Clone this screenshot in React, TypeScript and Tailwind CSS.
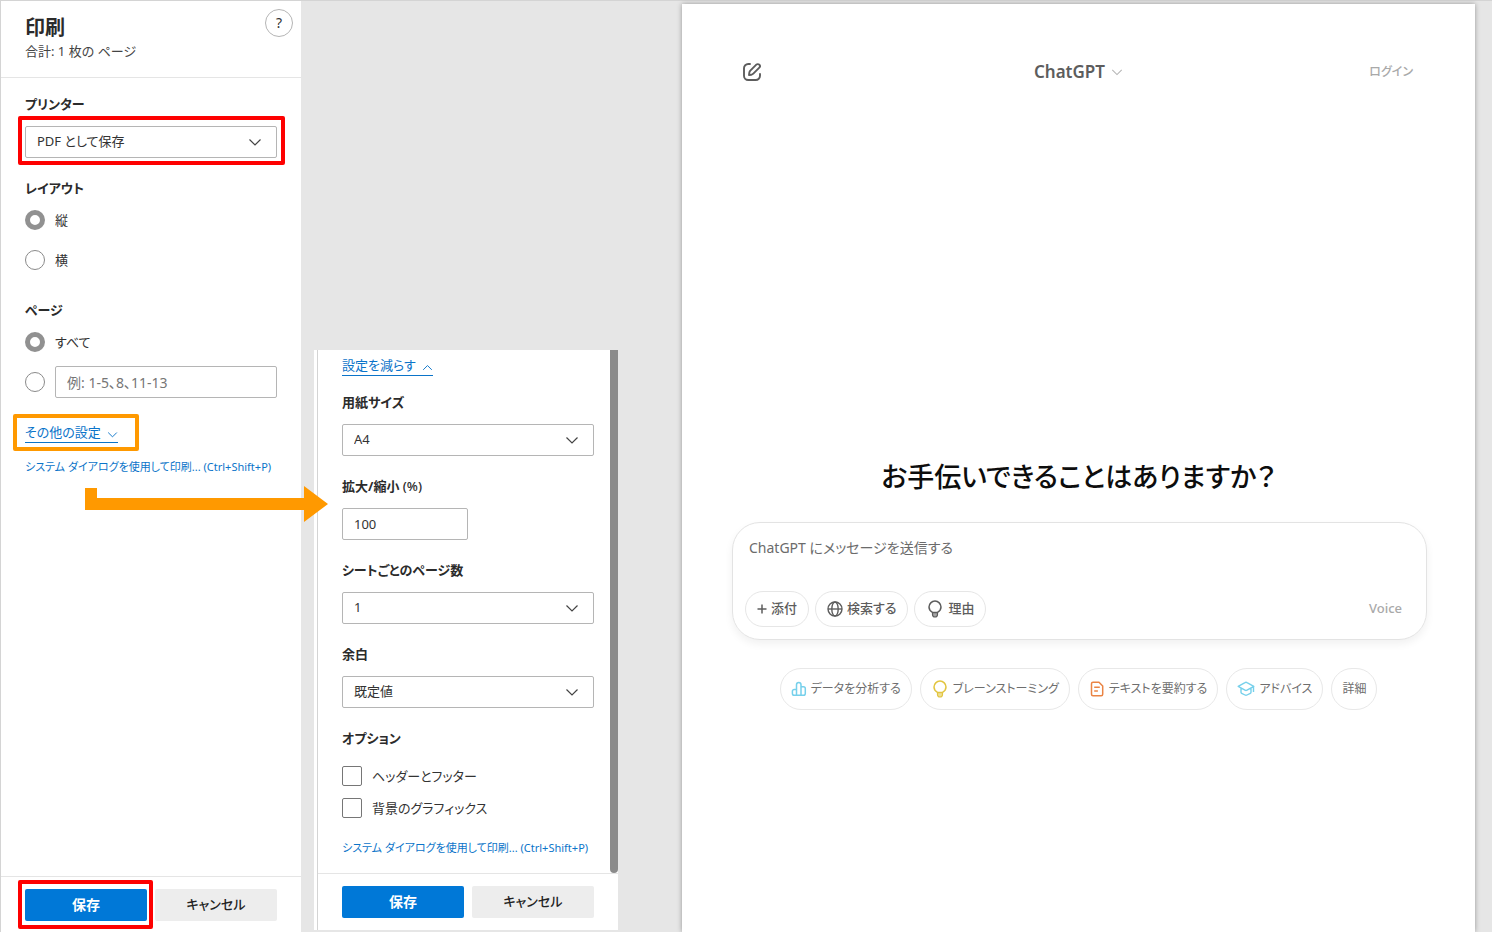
import React, { useState } from "react";

const labelClass = "block text-[13px] leading-5 font-bold text-[#2b2b2b]";

const Chevron = ({ className = "", up = false }: { className?: string; up?: boolean }) => (
  <svg
    className={className}
    viewBox="0 0 14 14"
    fill="none"
    stroke="currentColor"
    strokeWidth="1.2"
    aria-hidden="true"
  >
    <path d={up ? "M1.5 10 7 4.5 12.5 10" : "M1.5 4.5 7 10l5.5-5.5"} />
  </svg>
);

const SelectBox = ({ id, options }: { id: string; options: string[] }) => (
  <div className="relative">
    <select
      id={id}
      className="block h-8 w-full appearance-none rounded-xs border border-[#b5b5b5] bg-white pr-9 pl-[11px] text-[13px] text-[#333]"
    >
      {options.map((option) => (
        <option key={option}>{option}</option>
      ))}
    </select>
    <Chevron className="pointer-events-none absolute top-[9px] right-[15px] size-[14px] text-[#444]" />
  </div>
);

const Radio = ({
  id,
  name,
  checked,
  onChange,
  label,
}: {
  id: string;
  name: string;
  checked: boolean;
  onChange: () => void;
  label?: string;
}) => (
  <input
    type="radio"
    id={id}
    name={name}
    checked={checked}
    onChange={onChange}
    aria-label={label}
    className="size-5 shrink-0 appearance-none rounded-full border border-[#8a8a8a] bg-white checked:border-5 checked:border-[#919191]"
  />
);

const CheckRow = ({ id, label }: { id: string; label: string }) => (
  <div className="flex items-center gap-[10px]">
    <input
      type="checkbox"
      id={id}
      className="size-5 shrink-0 appearance-none rounded-xs border border-[#767676] bg-white checked:bg-[#0078d7]"
    />
    <label htmlFor={id} className="text-[13px] leading-5 text-[#333]">
      {label}
    </label>
  </div>
);

const SystemDialogLink = () => (
  <a href="#system" className="block text-[11px] leading-5 whitespace-nowrap text-[#0b74c9]">
    システム ダイアログを使用して印刷... (Ctrl+Shift+P)
  </a>
);

const SaveButton = () => (
  <button className="h-8 w-full rounded-xs bg-[#0078d7] text-sm font-bold text-white">保存</button>
);

const CancelButton = () => (
  <button className="h-8 flex-1 rounded-xs bg-[#ededed] text-[13px] font-medium text-[#222]">
    キャンセル
  </button>
);

const BulbIcon = ({ className }: { className: string }) => (
  <svg className={className} viewBox="0 0 18 18" fill="none" stroke="currentColor" strokeWidth="1.5">
    <path d="M6.5 12.4C4.3 11.2 3 9.4 3 7.1a6 6 0 0 1 12 0c0 2.3-1.3 4.1-3.5 5.3z" />
    <path
      d="M6.5 12.5v2c0 1.4.9 2.5 2.5 2.5s2.5-1.1 2.5-2.5v-2z"
      fill="currentColor"
      fillOpacity=".55"
      strokeWidth="1.2"
    />
  </svg>
);

const GlobeIcon = () => (
  <svg className="size-4" viewBox="0 0 16 16" fill="none" stroke="currentColor" strokeWidth="1.4">
    <circle cx="8" cy="8" r="7" />
    <ellipse cx="8" cy="8" rx="3.2" ry="7" />
    <path d="M1 8h14" />
  </svg>
);

const PlusIcon = () => (
  <svg className="size-[10px]" viewBox="0 0 10 10" fill="none" stroke="currentColor" strokeWidth="1.5">
    <path d="M5 .5v9M.5 5h9" />
  </svg>
);

const ChartIcon = () => (
  <svg className="size-4 text-[#76d0eb]" viewBox="0 0 16 16" fill="none" stroke="currentColor" strokeWidth="1.5">
    <path d="M5.5 14.300H3.200a1.800 1.800 0 0 1-1.800-1.800v-2.200a1.800 1.800 0 0 1 1.800-1.800h2.300zM5.500 14.300V3.700a2.200 2.200 0 0 1 4.500 0v10.600zM10 14.300V5.700h2.500a1.800 1.800 0 0 1 1.800 1.800v5a1.800 1.800 0 0 1-1.800 1.800z" />
  </svg>
);

const DocIcon = () => (
  <svg className="size-4 text-[#ea8444]" viewBox="0 0 16 16" fill="none" stroke="currentColor" strokeWidth="1.5">
    <path
      d="M4 1.2h6L13.700 5v8.300a1.500 1.500 0 0 1-1.500 1.500H4a1.500 1.500 0 0 1-1.500-1.500V2.700A1.500 1.500 0 0 1 4 1.200zM5.200 6.300h5.600M5.200 10h3.700"
      strokeLinejoin="round"
    />
  </svg>
);

const CapIcon = () => (
  <svg
    className="size-[18px] text-[#76d0eb]"
    viewBox="0 0 18 18"
    fill="none"
    stroke="currentColor"
    strokeWidth="1.4"
    strokeLinejoin="round"
  >
    <path d="M1.200 6.300 8 2.600a2 2 0 0 1 2 0l6.800 3.700L10 10.200a2 2 0 0 1-2 0zM4 8v4.200c0 .5.300.9.700 1.100L8 15a2 2 0 0 0 2 0l3.300-1.700c.4-.2.700-.6.700-1.100V8M16.500 6.500V12" />
  </svg>
);

const EditIcon = () => (
  <svg className="size-6" viewBox="0 0 24 24" fill="none" stroke="currentColor" strokeWidth="1.9" strokeLinecap="round">
    <path d="M10 4H8.200A4.200 4.200 0 0 0 4 8.200v7.600A4.200 4.200 0 0 0 8.200 20h7.600a4.200 4.200 0 0 0 4.200-4.200V14" />
    <path
      d="M16.300 4.700a2.100 2.100 0 0 1 3 3l-6 6c-.6.600-1.300.9-2.100 1.100l-2.200.3.300-2.200c.1-.8.500-1.600 1-2.200z"
      strokeLinejoin="round"
    />
  </svg>
);

const suggestions = [
  { text: "データを分析する", icon: <ChartIcon /> },
  { text: "ブレーンストーミング", icon: <BulbIcon className="size-[18px] text-[#e2c541]" /> },
  { text: "テキストを要約する", icon: <DocIcon /> },
  { text: "アドバイス", icon: <CapIcon /> },
  { text: "詳細", icon: null },
];

const tools = [
  { text: "添付", icon: <PlusIcon /> },
  { text: "検索する", icon: <GlobeIcon /> },
  { text: "理由", icon: <BulbIcon className="size-[18px]" /> },
];

function PrintSidebar() {
  const [layout, setLayout] = useState("portrait");
  const [pages, setPages] = useState("all");

  return (
    <aside className="flex w-[301px] shrink-0 flex-col border-l border-[#d4d4d4] bg-white">
      <header className="flex justify-between border-b border-[#e5e5e5] pt-2 pr-2 pb-4 pl-6">
        <div className="pt-[6px]">
          <h1 className="text-xl leading-[26px] font-bold text-[#2b2b2b]">印刷</h1>
          <p className="text-[13px] leading-5 text-[#444]">合計: 1 枚の ページ</p>
        </div>
        <button className="size-7 rounded-full border border-[#b5b5b5] text-sm text-[#333]">?</button>
      </header>

      <div className="px-6 pt-4">
        <label htmlFor="printer" className={labelClass}>
          プリンター
        </label>
        <div className="relative mt-3">
          <SelectBox id="printer" options={["PDF として保存"]} />
          <span className="pointer-events-none absolute -top-[10px] -right-2 -bottom-[7px] -left-[7px] rounded-xs border-4 border-[#fe0000]" />
        </div>

        <fieldset className="mt-5">
          <legend className={labelClass}>レイアウト</legend>
          <div className="mt-3 flex flex-col gap-5">
            <div className="flex items-center gap-[10px]">
              <Radio id="portrait" name="layout" checked={layout === "portrait"} onChange={() => setLayout("portrait")} />
              <label htmlFor="portrait" className="text-[13px] leading-5 text-[#333]">縦</label>
            </div>
            <div className="flex items-center gap-[10px]">
              <Radio id="landscape" name="layout" checked={layout === "landscape"} onChange={() => setLayout("landscape")} />
              <label htmlFor="landscape" className="text-[13px] leading-5 text-[#333]">横</label>
            </div>
          </div>
        </fieldset>

        <fieldset className="mt-[30px]">
          <legend className={labelClass}>ページ</legend>
          <div className="mt-3 flex items-center gap-[10px]">
            <Radio id="all" name="pages" checked={pages === "all"} onChange={() => setPages("all")} />
            <label htmlFor="all" className="text-[13px] leading-5 text-[#333]">すべて</label>
          </div>
          <div className="mt-[14px] flex items-center gap-[10px]">
            <Radio id="range" name="pages" checked={pages === "range"} onChange={() => setPages("range")} label="ページ範囲" />
            <input
              type="text"
              aria-label="ページ範囲"
              placeholder="例: 1-5、8、11-13"
              className="h-8 w-full min-w-0 rounded-xs border border-[#b5b5b5] px-[11px] text-sm placeholder:text-[#767676]"
            />
          </div>
        </fieldset>

        <div className="relative mt-6 mb-[14px]">
          <a href="#more" className="flex w-fit items-center gap-[6px] border-b border-[#0b74c9] text-[13px] leading-5 text-[#0b74c9]">
            その他の設定
            <Chevron className="mt-1 size-[11px]" />
          </a>
          <span className="pointer-events-none absolute -top-2 -bottom-2 -left-3 w-[126px] rounded-xs border-4 border-[#ff9900]" />
          <svg
            className="pointer-events-none absolute top-16 left-[60px] z-10 h-9 w-[243px]"
            viewBox="0 0 243 36"
            fill="#ff9900"
            aria-hidden="true"
          >
            <path d="M0 2h12v10h207V0l24 18-24 18V24H0z" />
          </svg>
        </div>
        <SystemDialogLink />
      </div>

      <footer className="mt-auto flex gap-2 border-t border-[#e5e5e5] px-6 pt-3 pb-[11px]">
        <div className="relative flex-1">
          <SaveButton />
          <span className="pointer-events-none absolute -top-[9px] -right-[6px] -bottom-2 -left-[7px] rounded-xs border-4 border-[#fe0000]" />
        </div>
        <CancelButton />
      </footer>
    </aside>
  );
}

function MoreSettings() {
  return (
    <section className="mt-auto mb-0.5 ml-[13px] w-[304px] shrink-0 bg-white pl-[3px]">
      <div className="border-l border-[#d4d4d4]">
        <div className="flex">
          <div className="min-w-0 flex-1 pt-[5px] pr-4 pb-[15px] pl-6">
            <a href="#less" className="flex w-fit items-center gap-[6px] border-b border-[#0b74c9] text-[13px] leading-5 text-[#0b74c9]">
              設定を減らす
              <Chevron up className="mt-1 size-[11px]" />
            </a>

            <div className="mt-4 flex flex-col gap-5">
              <div>
                <label htmlFor="paper" className={`${labelClass} mb-3`}>用紙サイズ</label>
                <SelectBox id="paper" options={["A4"]} />
              </div>
              <div>
                <label htmlFor="scale" className={`${labelClass} mb-3`}>
                  拡大/縮小 <span className="font-medium">(%)</span>
                </label>
                <input
                  id="scale"
                  type="text"
                  defaultValue="100"
                  className="block h-8 w-1/2 rounded-xs border border-[#b5b5b5] px-[11px] text-[13px] text-[#333]"
                />
              </div>
              <div>
                <label htmlFor="sheets" className={`${labelClass} mb-3`}>シートごとのページ数</label>
                <SelectBox id="sheets" options={["1"]} />
              </div>
              <div>
                <label htmlFor="margin" className={`${labelClass} mb-3`}>余白</label>
                <SelectBox id="margin" options={["既定値"]} />
              </div>
              <fieldset>
                <legend className={labelClass}>オプション</legend>
                <div className="mt-[18px] flex flex-col gap-3">
                  <CheckRow id="headers" label="ヘッダーとフッター" />
                  <CheckRow id="background" label="背景のグラフィックス" />
                </div>
              </fieldset>
              <SystemDialogLink />
            </div>
          </div>
          <div className="w-2 rounded-b-full bg-[#8b8b8b]" />
        </div>
        <div className="flex gap-2 border-t border-[#e5e5e5] px-6 py-3">
          <div className="flex-1">
            <SaveButton />
          </div>
          <CancelButton />
        </div>
      </div>
    </section>
  );
}

function PreviewPage() {
  return (
    <main className="mt-[3px] mr-[17px] ml-16 min-w-0 flex-1 bg-white shadow-[0_0_5px_rgba(0,0,0,0.35)]">
      <header className="grid grid-cols-3 items-center px-[58px] pt-14 text-[#5d5d5d]">
        <button aria-label="新しいチャット" className="justify-self-start">
          <EditIcon />
        </button>
        <button className="flex items-center gap-[6px] justify-self-center text-[17px] leading-6 font-semibold">
          ChatGPT
          <Chevron className="size-3 text-[#b4b4b4]" />
        </button>
        <a href="#login" className="justify-self-end pr-1 text-xs font-medium text-[#a9a9a9]">
          ログイン
        </a>
      </header>

      <h2 className="mt-[375px] text-center text-[27px] leading-9 font-medium text-[#0d0d0d]">
        お手伝いできることはありますか？
      </h2>

      <div className="mt-[27px] mr-12 ml-[50px] rounded-[28px] border border-[#e3e3e3] p-3 shadow-[0_4px_8px_rgba(0,0,0,0.06)]">
        <input
          type="text"
          aria-label="メッセージ"
          placeholder="ChatGPT にメッセージを送信する"
          className="block h-6 w-full px-1 text-sm placeholder:text-[#6b6b6b]"
        />
        <div className="mt-8 flex items-center gap-[6px]">
          {tools.map((tool) => (
            <button
              key={tool.text}
              className="flex h-9 items-center gap-1 rounded-full border border-[#e6e6e6] px-[11px] text-[13px] font-medium text-[#5d5d5d]"
            >
              {tool.icon}
              {tool.text}
            </button>
          ))}
          <button className="ml-auto pr-3 text-[13px] font-medium text-[#a9a9a9]">Voice</button>
        </div>
      </div>

      <div className="mt-7 flex flex-wrap justify-center gap-2">
        {suggestions.map((item) => (
          <button
            key={item.text}
            className="flex h-[42px] items-center gap-1 rounded-full border border-[#e8e8e8] px-[10px] text-xs text-[#6e6e6e]"
          >
            {item.icon}
            {item.text}
          </button>
        ))}
      </div>
    </main>
  );
}

export default function App() {
  return (
    <div
      lang="ja"
      className="flex min-h-screen border-t border-[#d4d4d4] bg-[#e6e6e6] font-['Noto_Sans','Noto_Sans_CJK_JP',sans-serif] [font-feature-settings:'palt']"
    >
      <PrintSidebar />
      <MoreSettings />
      <PreviewPage />
    </div>
  );
}
